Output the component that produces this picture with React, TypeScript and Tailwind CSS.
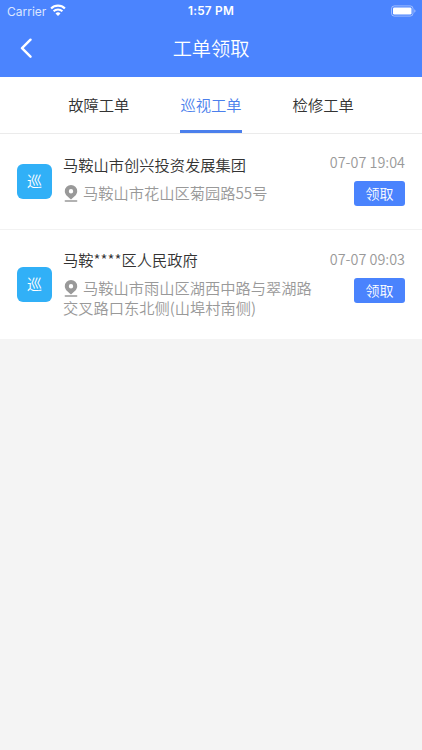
import React, { useState } from "react";

interface WorkOrder {
  id: number;
  tag: string;
  name: string;
  address: string;
  time: string;
}

const tabs = ["故障工单", "巡视工单", "检修工单"];

const orders: WorkOrder[] = [
  {
    id: 1,
    tag: "巡",
    name: "马鞍山市创兴投资发展集团",
    address: "马鞍山市花山区菊园路55号",
    time: "07-07 19:04",
  },
  {
    id: 2,
    tag: "巡",
    name: "马鞍****区人民政府",
    address: "马鞍山市雨山区湖西中路与翠湖路交叉路口东北侧(山埠村南侧)",
    time: "07-07 09:03",
  },
];

const StatusBar: React.FC = () => (
  <div className="grid h-[22px] grid-cols-3 items-center pr-[6px] pl-[7px] font-['Inter','Liberation_Sans',sans-serif] text-[11.8px] font-normal">
    <div className="flex items-center gap-[4px] text-[#dbe6ff]">
      <span className="pt-px text-[12px]">Carrier</span>
      <svg className="-mt-[2px]" width="16" height="12" viewBox="0 0 16 12" fill="none" stroke="#fff">
        <path d="M1.1 4.5a9.9 9.9 0 0 1 13.8 0" strokeWidth="2.2" />
        <path d="M3.6 7.2a6.3 6.3 0 0 1 8.8 0" strokeWidth="2" />
        <path d="M8 12 5.5 9.4a3.6 3.6 0 0 1 5 0z" fill="#fff" stroke="none" />
      </svg>
    </div>
    <div className="pt-[2px] pr-px text-center font-semibold tracking-[0.25px] text-white">1:57 PM</div>
    <div className="flex justify-end">
      <svg className="-mt-px" width="26" height="12" viewBox="0 0 26 12">
        <rect x="1.5" y="0.9" width="21.5" height="10.2" rx="2.8" fill="none" stroke="#fff" strokeOpacity="0.45" />
        <rect x="3" y="2.4" width="18.5" height="7.2" rx="1.4" fill="#fff" />
        <path d="M24.3 4.2c1.6.6 1.6 3 0 3.6z" fill="#fff" fillOpacity="0.5" />
      </svg>
    </div>
  </div>
);

const PinIcon: React.FC = () => (
  <svg
    className="mr-[5px] ml-[1px] inline-block align-[-2.5px]"
    width="14"
    height="17"
    viewBox="0 0 14 17"
    fill="#999"
  >
    <path
      fillRule="evenodd"
      d="M7 0A6.2 6.2 0 0 0 .8 6.2c0 3.4 3.2 5.6 6.2 8.2 3-2.6 6.2-4.8 6.200-8.200A6.200 6.200 0 0 0 7 0zm0 4a2.200 2.200 0 1 1 0 4.400A2.200 2.200 0 0 1 7 4z"
    />
    <rect x="0.6" y="15.2" width="12.8" height="1.5" rx="0.7" />
  </svg>
);

const OrderRow: React.FC<{ order: WorkOrder }> = ({ order }) => (
  <div className="group flex items-center bg-white px-[17px] pt-[18px] pb-[15px] first:min-h-[96px] first:pt-[19px] first:pb-[17px]">
    <div className="mb-[3px] flex size-[35px] shrink-0 items-center justify-center rounded-[6px] bg-[#31b0f7] text-[15px] text-white">
      {order.tag}
    </div>
    <div className="ml-[11px] w-[254px] shrink-0 self-start pb-[7px]">
      <h2 className="text-[15.25px] leading-[22px] text-[#333]">{order.name}</h2>
      <p className="mt-[8px] text-[15.25px] leading-[19.5px] text-[#999]">
        <PinIcon />
        {order.address}
      </p>
    </div>
    <div className="mt-px flex flex-1 flex-col items-end self-start group-first:-mt-px">
      <time className="text-[14.4px] leading-5 whitespace-nowrap text-[#999]">{order.time}</time>
      <button className="mt-[9px] h-[25px] w-[51px] rounded-[3px] bg-[#4a83fd] text-[14px] leading-[25px] text-white">
        领取
      </button>
    </div>
  </div>
);

const App: React.FC = () => {
  const [active, setActive] = useState(1);

  return (
    <div className="min-h-screen w-full bg-[#f4f4f4] font-['Noto_Sans_CJK_SC',sans-serif] font-[350]">
      <header className="h-[77px] bg-[#4b84fe] text-white">
        <StatusBar />
        <div className="grid h-[52px] grid-cols-[60px_1fr_60px] items-center">
          <svg
            className="ml-[20px]"
            width="13"
            height="20"
            viewBox="0 0 13 20"
            fill="none"
            stroke="currentColor"
            strokeWidth="2.4"
            strokeLinecap="round"
            strokeLinejoin="round"
          >
            <path d="M10.5 1.7 2 10.2l8.5 8.5" />
          </svg>
          <h1 className="text-center text-[19.2px] leading-7 font-[350]">工单领取</h1>
        </div>
      </header>

      <nav className="flex h-[57px] justify-center gap-[51px] border-b border-[#ebebeb] bg-white">
        {tabs.map((tab, index) => (
          <button
            key={tab}
            onClick={() => setActive(index)}
            className={`flex h-14 items-center border-b-3 pt-px text-[15.3px] ${
              active === index
                ? "border-[#4b7fec] text-[#4b7fec]"
                : "border-transparent text-[#333]"
            }`}
          >
            {tab}
          </button>
        ))}
      </nav>

      <div className="divide-y divide-[#f2f2f2]">
        {orders.map((order) => (
          <OrderRow key={order.id} order={order} />
        ))}
      </div>
    </div>
  );
};

export default App;
